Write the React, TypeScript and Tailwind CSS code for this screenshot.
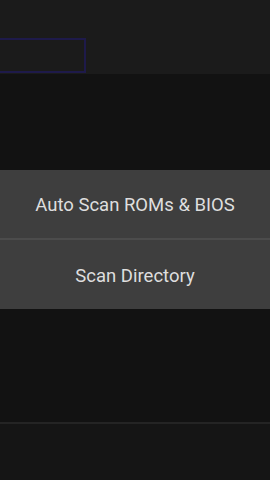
export default function App() {
  return (
    <div className="w-[270px] h-[480px] bg-[#121212] flex flex-col overflow-hidden" style={{ fontFamily: "Roboto, 'Noto Sans', sans-serif" }}>
      <div className="h-[74px] bg-[#1b1b1b] flex flex-col justify-end shrink-0">
        <div className="w-[86px] h-[35px] border-2 border-l-0 border-[#1e1a4a] mb-px"></div>
      </div>
      <div className="h-[96px] shrink-0"></div>
      <div className="bg-[#3e3e3e] flex flex-col shrink-0">
        <div className="h-[68px] pt-[3px] flex items-center justify-center text-[18.5px] font-normal text-[#dedede]">Auto Scan ROMs &amp; BIOS</div>
        <div className="h-[2px] bg-[#4c4c4c]"></div>
        <div className="h-[69px] pt-[5px] flex items-center justify-center text-[18.5px] font-normal text-[#dedede]">Scan Directory</div>
      </div>
      <div className="flex-1"></div>
      <div className="h-[2px] bg-[#242424] shrink-0"></div>
      <div className="h-[56px] bg-[#151515] shrink-0"></div>
    </div>
  );
}
